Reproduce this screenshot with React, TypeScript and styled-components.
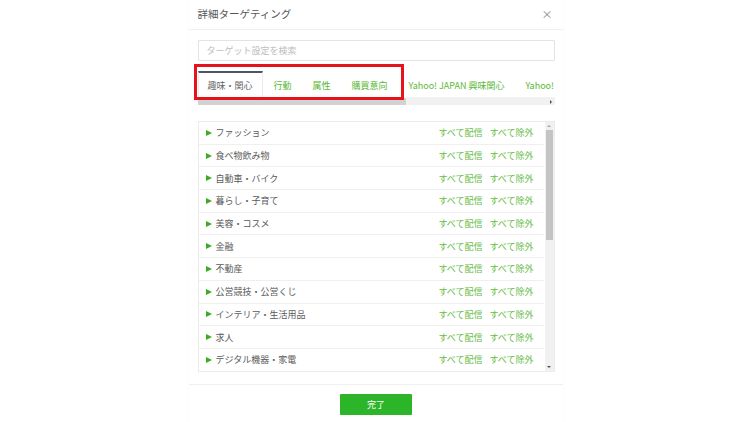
import styled, { createGlobalStyle } from "styled-components";

const GlobalStyle = createGlobalStyle`
  html, body {
    margin: 0;
    padding: 0;
    background: #ffffff;
    font-family: "Noto Sans CJK JP", "Noto Sans", sans-serif;
  }
`;

const categories = [
  "ファッション",
  "食べ物飲み物",
  "自動車・バイク",
  "暮らし・子育て",
  "美容・コスメ",
  "金融",
  "不動産",
  "公営競技・公営くじ",
  "インテリア・生活用品",
  "求人",
  "デジタル機器・家電",
];

const tabs = ["趣味・関心", "行動", "属性", "購買意向", "Yahoo! JAPAN 興味関心", "Yahoo! JAPAN 購買意向"];

export default function App() {
  return (
    <>
      <GlobalStyle />
      <Page>
        <Modal>
          <Header>
            <Title>詳細ターゲティング</Title>
            <Close>×</Close>
          </Header>
          <Body>
            <Search placeholder="ターゲット設定を検索" />
            <TabArea>
              <TabRow>
                {tabs.map((t, i) => (
                  <Tab key={t} $active={i === 0}>
                    {t}
                  </Tab>
                ))}
              </TabRow>
              <HScroll>
                <HThumb />
                <HArrow />
              </HScroll>
              <Highlight />
            </TabArea>
            <ListBox>
              <Rows>
                {categories.map((c) => (
                  <Row key={c}>
                    <Arrow />
                    <RowLabel>{c}</RowLabel>
                    <Links>
                      <LinkText>すべて配信</LinkText>
                      <LinkText>すべて除外</LinkText>
                    </Links>
                  </Row>
                ))}
              </Rows>
              <VScroll>
                <VArrowUp />
                <VThumb />
                <VArrowDown />
              </VScroll>
            </ListBox>
          </Body>
          <Footer>
            <DoneButton>完了</DoneButton>
          </Footer>
        </Modal>
      </Page>
    </>
  );
}

const Page = styled.div`
  display: flex;
  justify-content: center;
  width: 750px;
  height: 422px;
  overflow: hidden;
`;

const Modal = styled.div`
  width: 374px;
  height: 422px;
  margin-left: 1px;
  background: #fff;
  box-shadow: 0 0 3px rgba(0, 0, 0, 0.04);
  display: flex;
  flex-direction: column;
`;

const Header = styled.div`
  height: 30px;
  display: flex;
  align-items: center;
  justify-content: space-between;
  padding: 0 10px 0 9px;
  border-bottom: 1px solid #eeeeee;
  box-sizing: border-box;
`;

const Title = styled.div`
  font-size: 10.5px;
  color: #555;
  margin-top: -2px;
`;

const Close = styled.div`
  font-size: 11px;
  color: #888;
  margin-top: -2px;
`;

const Body = styled.div`
  padding: 10px 8px 0 9px;
  display: flex;
  flex-direction: column;
`;

const Search = styled.input`
  height: 21px;
  box-sizing: border-box;
  border: 1px solid #e3e3e3;
  border-radius: 1px;
  padding: 0 8px;
  font-family: inherit;
  font-size: 9px;
  outline: none;
  &::placeholder {
    color: #bdbdbd;
  }
`;

const TabArea = styled.div`
  position: relative;
  margin-top: 10px;
`;

const TabRow = styled.div`
  display: flex;
  height: 27px;
  overflow: hidden;
  white-space: nowrap;
  border-bottom: 1px solid #f2f2f2;
  box-sizing: border-box;
`;

const Tab = styled.div<{ $active?: boolean }>`
  flex: none;
  display: flex;
  align-items: center;
  padding: 0 9px;
  font-size: 9px;
  color: ${(p) => (p.$active ? "#666" : "#5ab833")};
  border-top: 2px solid ${(p) => (p.$active ? "#4d5669" : "transparent")};
  border-left: 1px solid ${(p) => (p.$active ? "#ececec" : "transparent")};
  border-right: 1px solid ${(p) => (p.$active ? "#ececec" : "transparent")};
  box-sizing: border-box;
  margin-left: ${(p) => (p.$active ? "0" : "1px")};
`;

const HScroll = styled.div`
  position: relative;
  height: 7px;
  background: #f1f1f1;
  display: flex;
  align-items: center;
`;

const HThumb = styled.div`
  width: 208px;
  height: 7px;
  background: #d2d2d2;
`;

const HArrow = styled.div`
  margin-left: auto;
  margin-right: 3px;
  width: 0;
  height: 0;
  border-top: 2px solid transparent;
  border-bottom: 2px solid transparent;
  border-left: 2px solid #505050;
`;

const Highlight = styled.div`
  position: absolute;
  left: -4px;
  top: -7px;
  width: 210px;
  height: 36px;
  box-sizing: border-box;
  border: 3px solid #e5141c;
  pointer-events: none;
`;

const ListBox = styled.div`
  margin-top: 16px;
  height: 251px;
  display: flex;
  border: 1px solid #ececec;
  box-sizing: border-box;
`;

const Rows = styled.div`
  flex: 1;
  overflow: hidden;
`;

const Row = styled.div`
  height: 22.7px;
  display: flex;
  align-items: center;
  padding: 0 10px 0 7px;
  border-bottom: 1px solid #efefef;
  box-sizing: border-box;
`;

const Arrow = styled.div`
  width: 0;
  height: 0;
  border-top: 3.5px solid transparent;
  border-bottom: 3.5px solid transparent;
  border-left: 6px solid #3aad1e;
  margin-right: 4px;
`;

const RowLabel = styled.div`
  font-size: 9px;
  color: #5a5a5a;
`;

const Links = styled.div`
  margin-left: auto;
  display: flex;
  gap: 7px;
`;

const LinkText = styled.span`
  font-size: 9px;
  color: #66bd45;
`;

const VScroll = styled.div`
  width: 9px;
  background: #f1f1f1;
  display: flex;
  flex-direction: column;
  align-items: center;
  margin-left: 1px;
`;

const VArrowUp = styled.div`
  margin-top: 3px;
  width: 0;
  height: 0;
  border-left: 2px solid transparent;
  border-right: 2px solid transparent;
  border-bottom: 2px solid #a3a3a3;
`;

const VThumb = styled.div`
  margin-top: 3px;
  width: 7px;
  height: 110px;
  background: #c4c4c4;
`;

const VArrowDown = styled.div`
  margin-top: auto;
  margin-bottom: 3px;
  width: 0;
  height: 0;
  border-left: 2px solid transparent;
  border-right: 2px solid transparent;
  border-top: 2px solid #505050;
`;

const Footer = styled.div`
  margin-top: 12px;
  border-top: 1px solid #f0f0f0;
  display: flex;
  justify-content: center;
  padding-top: 9px;
`;

const DoneButton = styled.button`
  width: 72px;
  height: 21px;
  border: none;
  border-radius: 1px;
  background: #2db52a;
  color: #fff;
  font-family: inherit;
  font-size: 9px;
  padding: 0;
  margin-left: 1px;
`;
